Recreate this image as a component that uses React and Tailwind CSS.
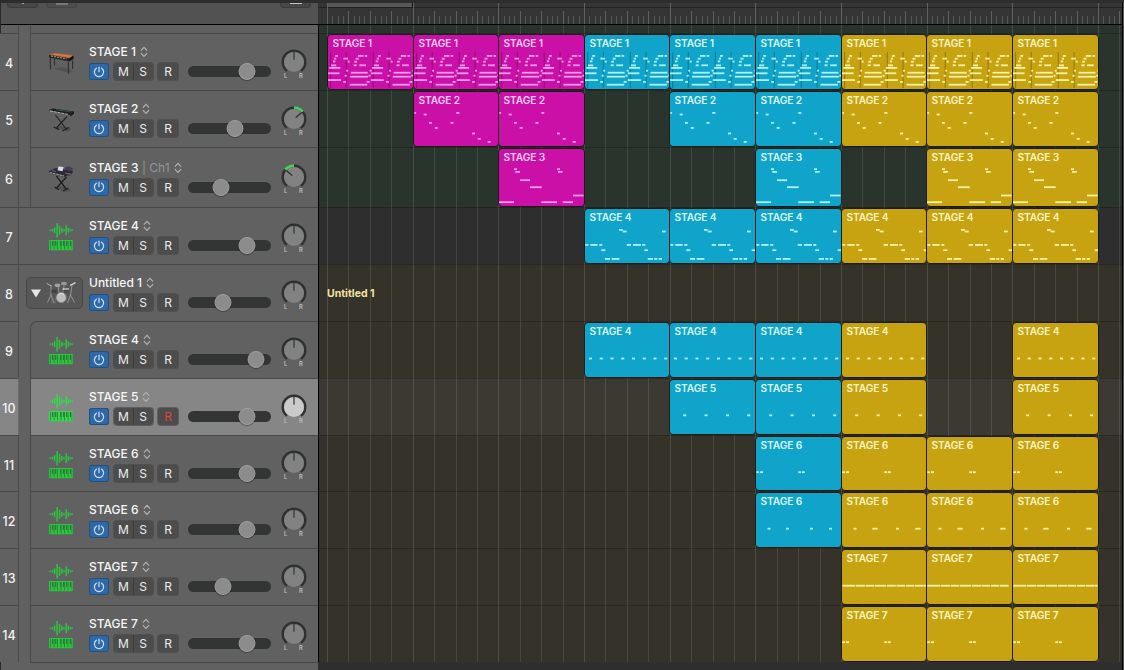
import React from "react";

const MAGENTA = {
  box: "bg-[#ca10a6]",
  text: "text-[#fbd0f3]",
  note: "fill-[#f99cee]",
};
const BLUE = {
  box: "bg-[#11a4cb]",
  text: "text-[#dcf6fc]",
  note: "fill-[#aaf3fd]",
};
const GOLD = {
  box: "bg-[#c7a211]",
  text: "text-[#fdf5c4]",
  note: "fill-[#fdf3a2]",
};

// Each note is [x, y, width] inside the region.
const arpeggioHalf = [
  [7.3, 20, 2.7], [6, 22.7, 2.2], [5, 25.5, 2.4], [3, 29.5, 5.2], [1.3, 32, 11],
  [0, 37.4, 11.5], [0, 44.2, 13], [15.5, 22.7, 4.5], [19.7, 25.7, 2],
  [30, 20, 5.5], [36.7, 20, 2.5], [27.7, 22.8, 3], [26.3, 25.8, 2.7],
  [25.7, 29.4, 3], [31.3, 29.4, 6.7], [18.3, 34.8, 1.8], [16.7, 39.8, 2],
  [15.3, 46, 2.7], [22.7, 36.8, 17], [22, 40.8, 18], [21.7, 48.8, 17.5],
  [38.6, 46, 3], [40.5, 39.8, 2], [41.7, 34.8, 2],
];
const NOTES = {
  arpeggio: [
    ...arpeggioHalf,
    ...arpeggioHalf.map(([x, y, w]) => [x + 42.8, y, w]),
  ],
  melody: [
    [0.3, 20, 1.8], [9.7, 21.6, 3], [15, 30, 2.8], [20.7, 35, 3], [36.5, 30, 3],
    [42.3, 20, 3], [58, 40.6, 3], [63.7, 46, 3], [73.7, 49, 3],
  ],
  bass: [
    [15, 19.3, 3], [16.3, 22, 4.7], [58, 19.3, 3], [59, 22, 4.7], [21, 30.3, 10],
    [31, 37.3, 11.7], [0, 52.3, 15], [42.3, 52.3, 15.7], [63.7, 52.3, 10.3],
    [74, 45.6, 10.6],
  ],
  riff: [
    [34, 20, 3.7], [37.7, 21.6, 4], [77, 21.6, 3.7], [0.3, 35, 3],
    [5.3, 35, 7.3], [14.3, 35, 3], [41.7, 35, 4.3], [48, 35, 8], [57.3, 35, 3],
    [16.3, 40.3, 4], [59.3, 40.3, 3.7], [20, 49, 5], [26.7, 49, 7.7],
    [62.7, 49, 5.3], [69.3, 49, 3], [73.7, 49, 3.3],
  ],
  eighths: [0, 1, 2, 3, 4, 5, 6, 7].map((i) => [4 + i * 10.75, 34.6, 3]),
  quarters: [[13.2, 34.4, 3], [34.6, 34.4, 3], [56, 34.4, 3], [77.2, 34.4, 3]],
  kick: [[0.3, 34.3, 2.6], [4, 34.3, 3], [42.3, 34.3, 2.8], [46, 34.3, 2.8]],
  snare: [[11.5, 34.8, 3], [30, 34.8, 3], [54, 34.8, 3], [73, 34.8, 3]],
  snareLong: [[11.5, 34.8, 3], [30.3, 34.8, 5.3], [54, 34.8, 3], [73.3, 34.8, 5.3]],
  hats: [
    [0.3, 34.8, 13], [14, 34.8, 8.9], [23.6, 34.8, 8.4], [32.7, 34.8, 11.5],
    [45, 34.8, 8.9], [54.5, 34.8, 8.6], [63.9, 34.8, 8.4], [73, 34.8, 8.6],
  ],
};

const M = MAGENTA;
const B = BLUE;
const G = GOLD;
const _ = null;

const tracks = [
  { n: 4, name: "STAGE 1", icon: "piano", vol: 58.5, height: "h-[57px]", lane: "bg-[#29352c]", clips: [M, M, M, B, B, B, G, G, G], notes: "arpeggio" },
  { n: 5, name: "STAGE 2", icon: "synth", vol: 47.3, pan: 50, height: "h-[57px]", lane: "bg-[#29352c]", clips: [_, M, M, _, B, B, G, G, G], notes: "melody" },
  { n: 6, name: "STAGE 3", channel: "Ch1", icon: "workstation", vol: 33.3, pan: -50, height: "h-[60px]", lane: "bg-[#29352c]", clips: [_, _, M, _, _, B, _, G, G], notes: "bass" },
  { n: 7, name: "STAGE 4", icon: "sampler", vol: 58.5, height: "h-[57px]", lane: "bg-[#2e2e2e]", top: true, clips: [_, _, _, B, B, B, G, G, G], notes: "riff" },
  { n: 8, name: "Untitled 1", icon: "drums", vol: 35.2, height: "h-[57px]", lane: "bg-[#353229]", top: true, folder: true, clips: [] },
  { n: 9, name: "STAGE 4", icon: "sampler", vol: 68, height: "h-[57px]", lane: "bg-[#353229]", first: true, clips: [_, _, _, B, B, B, G, _, G], notes: "eighths" },
  { n: 10, name: "STAGE 5", icon: "sampler", vol: 58.5, height: "h-[57px]", lane: "bg-[#3c3933]", selected: true, clips: [_, _, _, _, B, B, G, _, G], notes: "quarters" },
  { n: 11, name: "STAGE 6", icon: "sampler", vol: 58.5, height: "h-[56px]", lane: "bg-[#353229]", clips: [_, _, _, _, _, B, G, G, G], notes: "kick" },
  { n: 12, name: "STAGE 6", icon: "sampler", vol: 58.5, height: "h-[57px]", lane: "bg-[#353229]", clips: [_, _, _, _, _, B, G, G, G], notes: "snare" },
  { n: 13, name: "STAGE 7", icon: "sampler", vol: 35.2, height: "h-[57px]", lane: "bg-[#353229]", clips: [_, _, _, _, _, _, G, G, G], notes: "hats" },
  { n: 14, name: "STAGE 7", icon: "sampler", vol: 58.5, height: "h-[57px]", lane: "bg-[#353229]", clips: [_, _, _, _, _, _, G, G, G], notes: "kick" },
];

function SamplerIcon({ selected }) {
  const bars = [
    [0.5, 1.4], [2.8, 3], [5, 6], [7.5, 14.4], [9.9, 9], [12.2, 5], [14.3, 2.4],
    [16.6, 10], [18.8, 5], [21, 2.4], [22.8, 1.2],
  ];
  return (
    <svg width="24" height="28" viewBox="0 0 24 28" className={selected ? "fill-[#2fdc49]" : "fill-[#2bc640]"}>
      {bars.map(([x, h]) => (
        <rect key={x} x={x - 0.1} y={7.2 - h / 2} width="1.5" height={h} rx="0.4" />
      ))}
      <rect x="0" y="17" width="24" height="10.3" rx="0.8" />
      <g fill="#2f6b39">
        {[1.2, 4.7, 8.2, 11.7, 15.2, 18.7].map((x) => (
          <rect key={x} x={x} y="18" width="0.7" height="8.4" />
        ))}
        {[3.1, 6.2, 11.2, 14.1, 17.1, 20.9].map((x) => (
          <rect key={x} x={x} y="18" width="1.1" height="5" />
        ))}
        <rect x="22.6" y="18" width="0.6" height="8.4" />
      </g>
    </svg>
  );
}

function PianoIcon() {
  return (
    <svg width="28" height="28" viewBox="0 0 28 28">
      <path d="M6 19.5 L22 24 L26 22 L16 18 Z" fill="#4d4d4d" opacity=".7" />
      <path d="M3.4 8.5V20.5M21.4 13V24.5M25.6 11.5V20M7.5 10V16.5" stroke="#2b2b2b" strokeWidth="1" fill="none" />
      <path d="M2 5.8 L7.5 4 L26.5 6.2 L22 9.4 Z" fill="#c2693a" />
      <path d="M2 5.8 L22 9.3 V12.6 L2 8.6 Z" fill="#2a2523" />
      <path d="M22 9.4 L26.5 6.2 V10 L22 12.6 Z" fill="#141414" />
      <path d="M4 7 L19.5 9.8" stroke="#cfc0b2" strokeWidth="0.8" strokeDasharray="2 1" />
      <path d="M7 5 L24 7.4" stroke="#e58b52" strokeWidth="0.7" />
    </svg>
  );
}

function SynthIcon() {
  return (
    <svg width="28" height="28" viewBox="0 0 28 28">
      <path d="M8 22 L22 25.5 L24 22 L14 20 Z" fill="#4c4c4c" opacity=".7" />
      <path d="M8.5 9 L19.5 23.5 M20 10.5 L9.5 22" stroke="#232323" strokeWidth="1.2" />
      <path d="M15.5 25 L22 21.5 M6.8 21 L12 23.6" stroke="#1f1f1f" strokeWidth="1.2" />
      <path d="M1.5 4 L6 2.5 L27 5.6 L23.5 9.2 Z" fill="#1b1d1f" />
      <path d="M3 4.9 L21.5 8.4" stroke="#c8c8c8" strokeWidth="0.8" strokeDasharray="3 .8" />
      <path d="M9 3.7 L24.5 6.1" stroke="#3b6664" strokeWidth="0.7" />
      <path d="M23.5 9.2 L27 5.6 V7.4 L23.5 10.6 Z" fill="#111" />
    </svg>
  );
}

function WorkstationIcon() {
  return (
    <svg width="28" height="28" viewBox="0 0 28 28">
      <path d="M7 23 L20 27.5 L25 25 L15 21 Z" fill="#4c4c4c" opacity=".7" />
      <path d="M9.5 11 L19.5 24.5 M19.5 12 L9.5 23" stroke="#1f1f1f" strokeWidth="1.3" />
      <path d="M16 26 L21.5 23 M7.5 22 L12 24.8" stroke="#1f1f1f" strokeWidth="1.3" />
      <path d="M2 6 L9 3 L26 6 L24.5 10 L17 12 L3 8.6 Z" fill="#2c2836" />
      <path d="M11.5 1.4 L16.5 2 L15.6 6.2 L10.5 5.2 Z" fill="#d8dce8" />
      <path d="M18 2.4 L22 1.2 L26.5 4 L24.5 6 L18 5 Z" fill="#443d58" />
      <path d="M3 7.6 L17 11" stroke="#c6bfb4" strokeWidth="0.9" strokeDasharray="2.6 .6" />
      <path d="M5 5.6 L9 6.5 M18 8 L24 9" stroke="#6a6290" strokeWidth="1" />
      <path d="M20 10.2 L25 9" stroke="#8b5560" strokeWidth="0.8" />
    </svg>
  );
}

function DrumsIcon() {
  return (
    <svg width="30" height="25" viewBox="0 0 30 25">
      <g stroke="#a3a3a3" strokeWidth="0.8" fill="none">
        <path d="M5 5V14L1.5 21.5M5 14L8 22M26 4L24.5 14L28.5 21.5M24.5 14L21.5 22" />
        <path d="M0.6 2.4 L6 5.2" stroke="#c9c9c9" />
        <path d="M24 4.5 L29.5 1.6" stroke="#d7d7d7" strokeWidth="1.4" />
        <path d="M12 5 L13 12 M18 5L17 12" />
      </g>
      <ellipse cx="11.5" cy="4.2" rx="2.9" ry="1.8" fill="#a2a2a2" />
      <ellipse cx="18" cy="2.6" rx="2.9" ry="1.9" fill="#989898" />
      <path d="M5.5 8.5h5.5v3.5h-5.5z" fill="#444" />
      <path d="M16.5 7.4h6.5v1.3h-6.5z" fill="#dedede" />
      <path d="M17.5 8.8h5.5v3h-5.5z" fill="#4b4b4b" />
      <circle cx="15.2" cy="16.6" r="5.1" fill="#bdbdbd" stroke="#808080" strokeWidth="0.8" />
      <path d="M12.2 13.6a4.5 4.5 0 0 1 6 0" stroke="#e6e6e6" strokeWidth="0.9" fill="none" />
      <path d="M5 17.5h5v5h-5z" fill="#777" opacity=".35" />
    </svg>
  );
}

function TrackIcon({ kind, selected }) {
  if (kind === "piano") return <PianoIcon />;
  if (kind === "synth") return <SynthIcon />;
  if (kind === "workstation") return <WorkstationIcon />;
  return <SamplerIcon selected={selected} />;
}

function PanKnob({ pan = 0, selected }) {
  const rad = (a) => ((a - 90) * Math.PI) / 180;
  const pt = (a, r) =>
    `${(13 + r * Math.cos(rad(a))).toFixed(2)} ${(13 + r * Math.sin(rad(a))).toFixed(2)}`;
  const arc = (a, b, large) =>
    `M${pt(a, 11.3)}A11.3 11.3 0 ${large} 1 ${pt(b, 11.3)}`;
  return (
    <svg width="26" height="30" viewBox="0 0 26 30">
      <path d={arc(-142, 142, 1)} fill="none" stroke="#2f3130" strokeWidth="2.4" />
      {pan !== 0 && (
        <path
          d={pan > 0 ? arc(0, pan, 0) : arc(pan, 0, 0)}
          fill="none"
          stroke="#45cf63"
          strokeWidth="2.8"
        />
      )}
      <circle cx="13" cy="13" r="10" fill={selected ? "#cbcbcb" : "#828282"} />
      <path
        d={`M${pt(pan, 2.2)}L${pt(pan, 10)}`}
        stroke={pan === 0 ? "#2b3a2e" : "#262626"}
        strokeWidth="1.2"
      />
      <text x="3" y="29.2" fontSize="5.8" fontWeight="600" className="fill-[#bdbdbd]">L</text>
      <text x="18" y="29.2" fontSize="5.8" fontWeight="600" className="fill-[#bdbdbd]">R</text>
    </svg>
  );
}

function Chevrons() {
  return (
    <svg width="8" height="12" viewBox="0 0 8 12" fill="none" stroke="#b4b4b4" strokeWidth="1.1">
      <path d="M0.9 4.6L4 1.3L7.1 4.6M0.9 7.2L4 10.5L7.1 7.2" />
    </svg>
  );
}

function Controls({ track }) {
  const btn =
    "flex h-[17px] items-center justify-center bg-[#4c4c4c] pt-px text-[12px] leading-none text-[#ececec]";
  return (
    <div className="flex items-center">
      <div className="flex h-[17px] w-[20px] items-center justify-center rounded-[3px] bg-[#2e68a8] ring-1 ring-inset ring-[#24507f]">
        <svg width="12" height="12" viewBox="0 0 12 12" fill="none" stroke="#cfe3f7" strokeWidth="1.2" strokeLinecap="round">
          <path d="M6 1V5.6M3.4 2.2a4.6 4.6 0 1 0 5.2 0" />
        </svg>
      </div>
      <div className="ml-[5px] flex overflow-hidden rounded-[3px] ring-1 ring-[#454545]/60">
        <div className={`${btn} w-[20px] border-r border-[#3d3d3d]`}>M</div>
        <div className={`${btn} w-[19px] pr-px`}>S</div>
      </div>
      <div className={`${btn} ml-[5px] w-[20px] rounded-[3px] ring-1 ring-[#454545]/60 ${track.selected ? "!text-[#e0443e]" : ""}`}>
        R
      </div>
      <div className="ml-[10px] flex h-[11px] w-[83px] items-center rounded-full bg-[#323533]">
        <div
          className="h-[17px] w-[17px] shrink-0 -translate-x-1/2 rounded-full border border-[#a0a0a0] bg-[#8b8c8b] shadow-[0_1px_1px_rgba(0,0,0,0.35)]"
          style={{ marginLeft: track.vol }}
        />
      </div>
    </div>
  );
}

function HeaderRow({ track }) {
  const nested = !track.top;
  const bg = track.selected ? "bg-[#868686]" : "bg-[#616161]";
  return (
    <div className={`flex w-full ${track.height}`}>
      <div className={`flex w-[18px] shrink-0 items-center justify-center border-t border-[#484848] pt-[5px] text-[12.5px] font-medium text-[#f2f2f2] ${bg}`}>
        {track.n}
      </div>
      <div className={`w-px shrink-0 ${track.selected ? "bg-[#6a6a6a]" : "bg-[#4b4b4b]"}`} />
      {nested && <div className="w-[11px] shrink-0 bg-[#616161]" />}
      <div
        className={`flex grow items-center border-t border-[#484848] pr-[11px] ${bg} ${nested ? "border-l" : "pl-[12px]"} ${track.first ? "rounded-tl-[7px]" : ""}`}
      >
        {track.folder ? (
          <div className="-ml-[5px] mr-[6px] flex h-[32px] w-[57px] items-center rounded-[5px] border border-[#474747] bg-[#575757] pl-[4px]">
            <svg width="10" height="9" viewBox="0 0 10 9" className="fill-[#e6e6e6]">
              <path d="M0 0.5H10L5 8.5Z" />
            </svg>
            <div className="ml-[5px]">
              <DrumsIcon />
            </div>
          </div>
        ) : (
          <div className={`flex w-[58px] justify-center pt-[2px] ${track.top ? "pl-[2px]" : "pl-[1px]"}`}>
            <TrackIcon kind={track.icon} selected={track.selected} />
          </div>
        )}
        <div className="flex flex-col gap-[3px]">
          <div className="flex h-[16px] items-center text-[12px] font-medium leading-none text-[#f6f6f6]">
            <span>{track.name}</span>
            {track.channel && (
              <span className="font-normal text-[#969696]">&nbsp;| {track.channel}</span>
            )}
            <span className="ml-[4px]">
              <Chevrons />
            </span>
          </div>
          <Controls track={track} />
        </div>
        <div className="ml-auto pt-[3px]">
          <PanKnob pan={track.pan} selected={track.selected} />
        </div>
      </div>
    </div>
  );
}

function Region({ track, color, index }) {
  let notes = NOTES[track.notes];
  if (track.n === 12 && color === GOLD) notes = NOTES.snareLong;
  if (track.n === 7 && index > 3) notes = [...notes, [81.7, 40.3, 4]];
  if (track.n === 13 && index !== 7) notes = [...notes, [82, 34.8, 2.5]];
  const tall = track.n === 6;
  return (
    <div className={`-mr-px overflow-hidden rounded-[4px] border border-[#1a1b17] ${color.box}`} style={{ gridColumn: index + 1 }}>
      <div className="h-0">
        <svg width="86" height={tall ? 57 : 54} viewBox={tall ? "0 0 86 57" : "0 0 86 54"} className={color.note}>
          {track.notes === "arpeggio" &&
            [2, 17.7, 44.7, 60.5].map((x) => (
              <rect key={x} x={x} y="17" width="1.2" height="36" fill="#000" opacity=".22" />
            ))}
          {notes.map(([x, y, w], i) => (
            <rect key={i} x={x} y={y} width={w} height="1.8" />
          ))}
        </svg>
      </div>
      <div className={`pt-[2px] pl-[4.5px] text-[10.2px] font-semibold leading-[13px] tracking-[-0.1px] ${color.text}`}>
        {track.name}
      </div>
    </div>
  );
}

const STEP = 771 / 36;

function GridLines() {
  return (
    <svg className="absolute inset-0" width="804" height="637" viewBox="0 0 804 637">
      {Array.from({ length: 38 }, (_v, i) => (
        <rect
          key={i}
          x={Math.round(8 + i * STEP)}
          y="0"
          width="1"
          height="637"
          fill="#fff"
          opacity={i % 4 === 0 ? 0.13 : 0.1}
        />
      ))}
    </svg>
  );
}

function Ruler() {
  return (
    <svg width="804" height="21" viewBox="0 0 804 21" className="block">
      <rect width="804" height="21" fill="#353535" />
      <rect y="4" width="804" height="1" fill="#222" />
      <rect x="9" y="0" width="86" height="4" fill="#575757" />
      <rect x="94" y="0" width="1.2" height="5" fill="#111" />
      {Array.from({ length: 149 }, (_v, i) => {
        const y = i % 16 === 0 ? 0 : i % 4 === 0 ? 8 : 13;
        return (
          <rect
            key={i}
            x={Math.round(9 + (i * STEP) / 4)}
            y={y}
            width="1"
            height={21 - y}
            fill={i % 4 === 0 ? "#606060" : "#565656"}
          />
        );
      })}
    </svg>
  );
}

export default function App() {
  return (
    <div className="flex h-[670px] w-[1124px] flex-col overflow-hidden bg-[#2e2e2e] font-['Inter','Liberation_Sans',sans-serif]">
      <div className="h-[3px] shrink-0 bg-[#2d2d2d]" />
      <div className="flex grow">
        <div className="w-px shrink-0 bg-[#2a2a2a]" />
        <div className="flex w-[317px] shrink-0 flex-col bg-[#616161]">
          <div className="flex h-[22px] items-start border-b border-black bg-[#525252] pr-[7px] pl-[6px]">
            <div className="flex h-[5px] w-[31px] justify-center rounded-b-[4px] border border-t-0 border-[#3b3b3b] bg-[#474747]">
              <div className="h-px w-[2px] bg-[#a0a0a0]" />
            </div>
            <div className="ml-[8px] flex h-[5px] w-[31px] justify-center rounded-b-[4px] border border-t-0 border-[#454545] bg-[#4d4d4d]">
              <div className="h-[2px] w-[12px] bg-[#777]" />
            </div>
            <div className="ml-auto flex h-[5px] w-[31px] justify-center rounded-b-[4px] border border-t-0 border-[#3b3b3b] bg-[#474747]">
              <div className="h-px w-[12px] bg-[#c4c4c4]" />
            </div>
          </div>
          <div className="flex h-[8px]">
            <div className="w-[17px]" />
            <div className="w-px bg-[#4b4b4b]" />
            <div className="w-[11px]" />
            <div className="w-px bg-[#484848]" />
          </div>
          <div className="-ml-px flex flex-col">
            {tracks.map((t) => (
              <HeaderRow key={t.n} track={t} />
            ))}
          </div>
          <div className="ml-[29px] h-px bg-[#484848]" />
        </div>
        <div className="flex w-[804px] shrink-0 flex-col">
          <div className="border-b border-black">
            <Ruler />
          </div>
          <div className="relative flex flex-col border-l border-black">
            <div className="h-[8px] bg-[#29352c]" />
            {tracks.map((t) => (
              <div key={t.n} className={`border-t border-black/20 ${t.height} ${t.lane}`} />
            ))}
            <GridLines />
            <div className="absolute inset-x-0 top-[8px] flex flex-col pl-[8px]">
              {tracks.map((t) => (
                <div key={t.n} className={`grid w-[771px] grid-cols-[86px_85px_86px_85px_86px_86px_85px_86px_86px] pt-px ${t.height}`}>
                  {t.folder && (
                    <div className="pt-[22px] text-[10.5px] font-bold leading-[14px] whitespace-nowrap text-[#f3e3a6]">
                      {t.name}
                    </div>
                  )}
                  {t.clips.map((c, i) =>
                    c ? <Region key={i} track={t} color={c} index={i} /> : null
                  )}
                </div>
              ))}
            </div>
          </div>
        </div>
        <div className="w-px shrink-0 bg-black" />
        <div className="w-px grow bg-[#555]" />
      </div>
    </div>
  );
}
